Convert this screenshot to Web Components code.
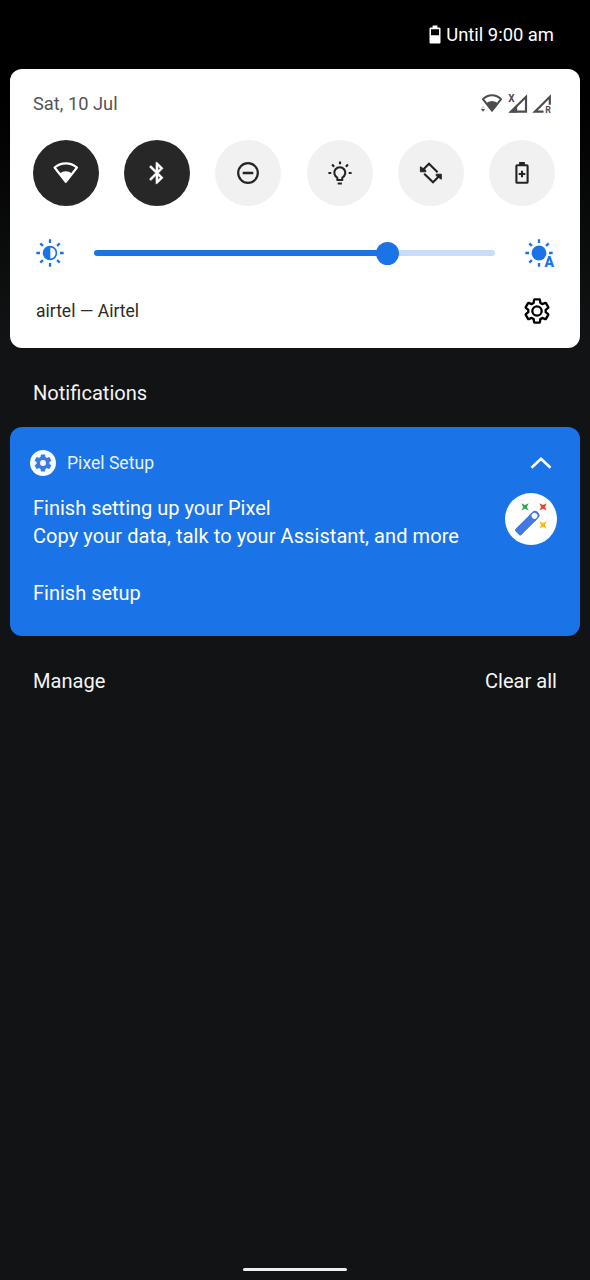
<!DOCTYPE html>
<html lang="en">
<head>
<meta charset="utf-8">
<title>Notification shade</title>
<style>
  body { margin: 0; background: #111314; font-family: Roboto, "Liberation Sans", sans-serif; }
</style>
</head>
<body>
<notification-shade></notification-shade>
<script>
const GEAR = 'M19.43 12.98c.04-.32.07-.64.07-.98 0-.34-.03-.66-.07-.98l2.11-1.65c.19-.15.24-.42.12-.64l-2-3.46c-.09-.16-.26-.25-.44-.25-.06 0-.12.01-.17.03l-2.49 1c-.52-.4-1.08-.73-1.69-.98l-.38-2.65C14.46 2.18 14.25 2 14 2h-4c-.25 0-.46.18-.49.42l-.38 2.65c-.61.25-1.17.59-1.69.98l-2.49-1c-.06-.02-.12-.03-.18-.03-.17 0-.34.09-.43.25l-2 3.46c-.13.22-.07.49.12.64l2.11 1.65c-.04.32-.07.65-.07.98 0 .33.03.66.07.98l-2.11 1.65c-.19.15-.24.42-.12.64l2 3.46c.09.16.26.25.44.25.06 0 .12-.01.17-.03l2.49-1c.52.4 1.08.73 1.69.98l.38 2.65c.03.24.24.42.49.42h4c.25 0 .46-.18.49-.42l.38-2.65c.61-.25 1.17-.59 1.69-.98l2.49 1c.06.02.12.03.18.03.17 0 .34-.09.43-.25l2-3.46c.12-.22.07-.49-.12-.64l-2.11-1.65z';

const rays = (angles, r1, r2, w) => angles.map(a =>
  `<path d="M0 ${-r1}V${-r2}" transform="rotate(${a})" stroke="currentColor" stroke-width="${w}" fill="none"/>`).join('');

// name: [width, height, viewBox, markup]
const ICONS = {
  battery: [12, 19, '0 0 12 19', `<path d="M3.6 .5h4.8v2h2.1q1 0 1 1V17.5q0 1-1 1H1.5q-1 0-1-1V3.5q0-1 1-1h2.1zM2 4.2V10.300h8V4.200z" fill-rule="evenodd" fill="currentColor"/>`],
  wifiStatus: [22, 19, '0 0 22 19', `<path d="M1.900 5.200Q6 1.300 11 1.300T20.100 5.200L11 16.600z" fill="none" stroke="currentColor" stroke-width="2" stroke-linejoin="round"/><path d="M4.600 9.400Q7.500 6.900 11 6.900T17.400 9.400L11 17.400z" fill="currentColor"/><path d="M-.2 13.800l2.200-1.900 2.200 1.900z" fill="currentColor" opacity=".35" stroke="#fff" stroke-width=".3"/><path d="M0 15h4l-2 2.500z" fill="currentColor" stroke="currentColor" stroke-width=".3"/>`],
  signalX: [20, 19, '0 0 20 19', `<path d="M2.900 17.700L18 2.800V17.700z" fill="none" stroke="currentColor" stroke-width="2.200"/><path d="M1 18.500L9.200 10.200V18.500z" fill="currentColor"/><text x="0.300" y="7.800" font-size="10" font-weight="700" fill="currentColor">X</text>`],
  signalR: [20, 19, '0 0 20 19', `<path d="M10.500 17.700H1.900L16.800 2.800V10.800" fill="none" stroke="currentColor" stroke-width="2.200"/><text x="12.200" y="18.600" font-size="8.800" font-weight="700" fill="currentColor">R</text>`],
  wifi: [28, 24, '0 0 28 24', `<path d="M2.600 6.500Q7.600 2.300 13.800 2.300T25 6.500L13.800 20.800z" fill="none" stroke="currentColor" stroke-width="2.200" stroke-linejoin="round"/><path d="M7.600 12.500Q10.500 10.200 13.800 10.200T20 12.500L13.800 21z" fill="currentColor"/>`],
  bluetooth: [26, 26, '0 0 24 24', `<path fill="currentColor" stroke="currentColor" stroke-width=".4" d="M17.710 7.710L12 2h-1v7.590L6.410 5 5 6.410 10.590 12 5 17.590 6.410 19 11 14.410V22h1l5.710-5.710-4.300-4.290 4.300-4.290zM13 5.830l1.880 1.880L13 9.590V5.830zm1.880 10.460L13 18.170v-3.760l1.880 1.880z"/>`],
  dnd: [24, 24, '-12 -12 24 24', `<circle r="9.800" fill="none" stroke="currentColor" stroke-width="2.200"/><path d="M-5.300 0H5.300" stroke="currentColor" stroke-width="2.300"/>`],
  bulb: [26, 26, '-13 -13 26 26', `<path d="M-2.700 7V4.600A5.500 5.500 0 1 1 2.300 4.600V7z" fill="none" stroke="currentColor" stroke-width="2.100" stroke-linejoin="round"/><path d="M-2.300 10.500H1.900" stroke="currentColor" stroke-width="2.200"/>${rays([-90, -43, 0, 43, 90], 8.7, 11.6, 2.2)}`],
  rotate: [26, 26, '-13 -13 26 26', `<g fill="none" stroke="currentColor" stroke-width="2.200"><path d="M-8-3.300L-2-9.300L6.600-.8M8 3.300L2 9.300L-6.800 .8"/></g><path d="M-10.600-6.300V-1.200H-5.200V-2.800zM10.400 6.300V1.200H5.200V2.800z" fill="currentColor" stroke="currentColor" stroke-width=".9"/>`],
  saver: [26, 26, '-13 -13 26 26', `<rect x="-5.600" y="-7.800" width="11.200" height="17.600" rx=".8" fill="none" stroke="currentColor" stroke-width="2.100"/><path d="M-2.900-10.900H2.900V-8H-2.900z" fill="currentColor"/><path d="M-3.300 1H3.300M0-2.300V4.300" stroke="currentColor" stroke-width="2.100"/>`],
  sunHalf: [30, 30, '-15 -15 30 30', `<circle r="6.400" fill="none" stroke="currentColor" stroke-width="1.700"/><path d="M.3-6.500V6.500A6.500 6.500 0 0 1 .3-6.500z" fill="currentColor"/>${rays([0, 45, 90, 135, 180, 225, 270, 315], 10, 13.7, 2.3)}`],
  sunAuto: [30, 30, '-15 -15 30 30', `<circle r="7.400" fill="currentColor"/>${rays([0, 45, 90, 180, 225, 270, 315], 10, 13.7, 2.3)}<text x="5.500" y="13.700" font-size="14" font-weight="900" fill="currentColor" stroke="#fff" stroke-width=".8" paint-order="stroke">A</text>`],
  settings: [28, 28, '0 0 24 24', `<path d="${GEAR}" fill="none" stroke="currentColor" stroke-width="2" stroke-linejoin="round"/><circle cx="12" cy="12" r="4" fill="none" stroke="currentColor" stroke-width="2"/>`],
  pixelSetup: [26, 26, '-13 -13 26 26', `<circle r="13" fill="#f4faff"/><g transform="scale(.85) translate(-12 -12)"><path d="${GEAR}" fill="#3d7ae0"/><circle cx="12" cy="12" r="3.500" fill="#f4faff"/></g>`],
  chevron: [24, 14, '0 0 24 14', `<path d="M2.500 11.800L12 2.700L21.500 11.800" fill="none" stroke="currentColor" stroke-width="2.600"/>`],
  wand: [52, 52, '0 0 52 52', `<circle cx="26" cy="26" r="26" fill="#fff"/>
    <g transform="translate(22.600 29.800) rotate(-45)"><rect x="-14.500" y="-4.200" width="24" height="8.400" rx="1.500" fill="#4179df"/><rect x="3" y="-4.200" width="11.700" height="8.400" rx="3.800" fill="#4179df"/><circle cx="9.800" cy="0" r="2.900" fill="#fff"/></g>
    <path d="M16.300 10.200L20 12L23.700 10.200L21.900 13.900L23.700 17.600L20 15.800L16.300 17.600L18.100 13.900z" fill="#34a853"/><path d="M34.300 10.200L38 12L41.700 10.200L39.900 13.900L41.700 17.600L38 15.800L34.300 17.600L36.100 13.900z" fill="#ea4335"/><path d="M34.300 28.200L38 30L41.700 28.200L39.900 31.900L41.700 35.600L38 33.800L34.300 35.600L36.100 31.900z" fill="#fbbc04"/>`]
};

const define = (name, html, setup) => customElements.define(name, class extends HTMLElement {
  constructor() {
    super();
    this.attachShadow({ mode: 'open' }).innerHTML = html;
  }
  connectedCallback() { if (setup) setup.call(this, this.shadowRoot); }
});

define('ui-icon', `<style>:host{display:block;flex:none;line-height:0}svg{display:block;overflow:visible}</style><span></span>`, function (root) {
  const [w, h, box, body] = ICONS[this.getAttribute('name')];
  root.querySelector('span').innerHTML = `<svg width="${w}" height="${h}" viewBox="${box}" aria-hidden="true">${body}</svg>`;
});

define('status-line', `<style>
  :host{display:flex;justify-content:flex-end;align-items:center;gap:5px;height:69px;padding:0 36px 0 0;box-sizing:border-box;color:#fff;font-size:18.400px}
  ui-icon{margin-bottom:1px}
</style><ui-icon name="battery"></ui-icon><slot></slot>`);

define('quick-tile', `<style>
  :host{display:grid;place-items:center;width:66px;height:66px;border-radius:50%;background:#f1f1f1;color:#242424}
  :host([on]){background:#272727;color:#fff}
</style>`, function (root) {
  const icon = document.createElement('ui-icon');
  icon.setAttribute('name', this.getAttribute('icon'));
  root.append(icon);
});

define('brightness-slider', `<style>
  :host{display:flex;align-items:center;justify-content:space-between;color:#1b73e8;height:30px}
  .track{display:flex;align-items:center;width:401px}
  .full{height:6px;width:284px;border-radius:3px 0 0 3px;background:#1b73e8}
  .thumb{width:23px;height:23px;margin:0 -2px;border-radius:50%;background:#1b73e8;z-index:1}
  .rest{height:6px;flex:1;border-radius:0 3px 3px 0;background:#c6dcf8}
</style><ui-icon name="sunHalf"></ui-icon><div class="track"><div class="full"></div><div class="thumb"></div><div class="rest"></div></div><ui-icon name="sunAuto"></ui-icon>`);

define('quick-settings', `<style>
  :host{display:block;height:279px;margin:0 10px;padding:0 25px 0 23px;box-sizing:border-box;border-radius:12px;background:#fff;overflow:hidden}
  .top,.tiles,.foot{display:flex;align-items:center;justify-content:space-between}
  .top{height:71px;padding-bottom:2px;box-sizing:border-box;color:#555;font-size:18.300px}
  .signals{display:flex;gap:5px;color:#4d4d4d;margin:0 2px 1px 0}
  .tiles{height:66px}
  brightness-slider{margin:32px 1px 0 2px}
  .foot{height:56px;margin-top:15px;padding:0 4px 0 3px;color:#2c2c2c;font-size:17.500px}
  .foot ui-icon{color:#000}
</style>
<div class="top"><slot name="date"></slot><div class="signals"><ui-icon name="wifiStatus"></ui-icon><ui-icon name="signalX"></ui-icon><ui-icon name="signalR"></ui-icon></div></div>
<div class="tiles"><slot></slot></div>
<brightness-slider></brightness-slider>
<div class="foot"><slot name="carrier"></slot><ui-icon name="settings"></ui-icon></div>`);

define('notification-card', `<style>
  :host{display:block;height:209px;margin:0 10px;padding:21px 23px 0;box-sizing:border-box;border-radius:12px;background:#1b73e8;color:#fff;font-size:20px}
  .head{display:flex;align-items:center;height:30px;font-size:17.600px;gap:11px;margin-left:-3px;color:#e8f1fd}
  .head ui-icon:last-child{margin-left:auto;margin-right:4px;color:#fff}
  .body{display:flex;justify-content:space-between;align-items:flex-start;margin-top:15px;height:71px}
  .copy{line-height:28.500px;white-space:nowrap;padding-top:.5px}
  .action{line-height:28px;margin-top:15px}
</style>
<div class="head"><ui-icon name="pixelSetup"></ui-icon><slot name="app"></slot><ui-icon name="chevron"></ui-icon></div>
<div class="body"><div class="copy"><slot name="title"></slot><slot name="text"></slot></div><ui-icon name="wand"></ui-icon></div>
<div class="action"><slot name="action"></slot></div>`);

define('list-bar', `<style>
  :host{display:flex;justify-content:space-between;align-items:center;padding:0 33px;color:#f4f4f4;font-size:20.100px}
</style><slot></slot>`);

define('notification-shade', `<style>
  :host{display:flex;flex-direction:column;height:1280px;background:linear-gradient(#000 0,#000 100px,#111314 340px)}
  .title{height:79px;padding-top:11px;box-sizing:border-box}
  .actions{height:90px}
  .home{width:104px;height:3px;border-radius:2px;background:#eee;margin:auto auto 9px}
  [slot=title],[slot=text]{display:block}
  [slot=text]{letter-spacing:.07px}
</style>
<status-line><span>Until 9:00 am</span></status-line>
<quick-settings>
  <span slot="date">Sat, 10 Jul</span>
  <quick-tile icon="wifi" on></quick-tile><quick-tile icon="bluetooth" on></quick-tile><quick-tile icon="dnd"></quick-tile><quick-tile icon="bulb"></quick-tile><quick-tile icon="rotate"></quick-tile><quick-tile icon="saver"></quick-tile>
  <span slot="carrier">airtel — Airtel</span>
</quick-settings>
<list-bar class="title"><span>Notifications</span></list-bar>
<notification-card>
  <span slot="app">Pixel Setup</span>
  <span slot="title">Finish setting up your Pixel</span>
  <span slot="text">Copy your data, talk to your Assistant, and more</span>
  <span slot="action">Finish setup</span>
</notification-card>
<list-bar class="actions"><span>Manage</span><span>Clear all</span></list-bar>
<div class="home"></div>`);
</script>
</body>
</html>
